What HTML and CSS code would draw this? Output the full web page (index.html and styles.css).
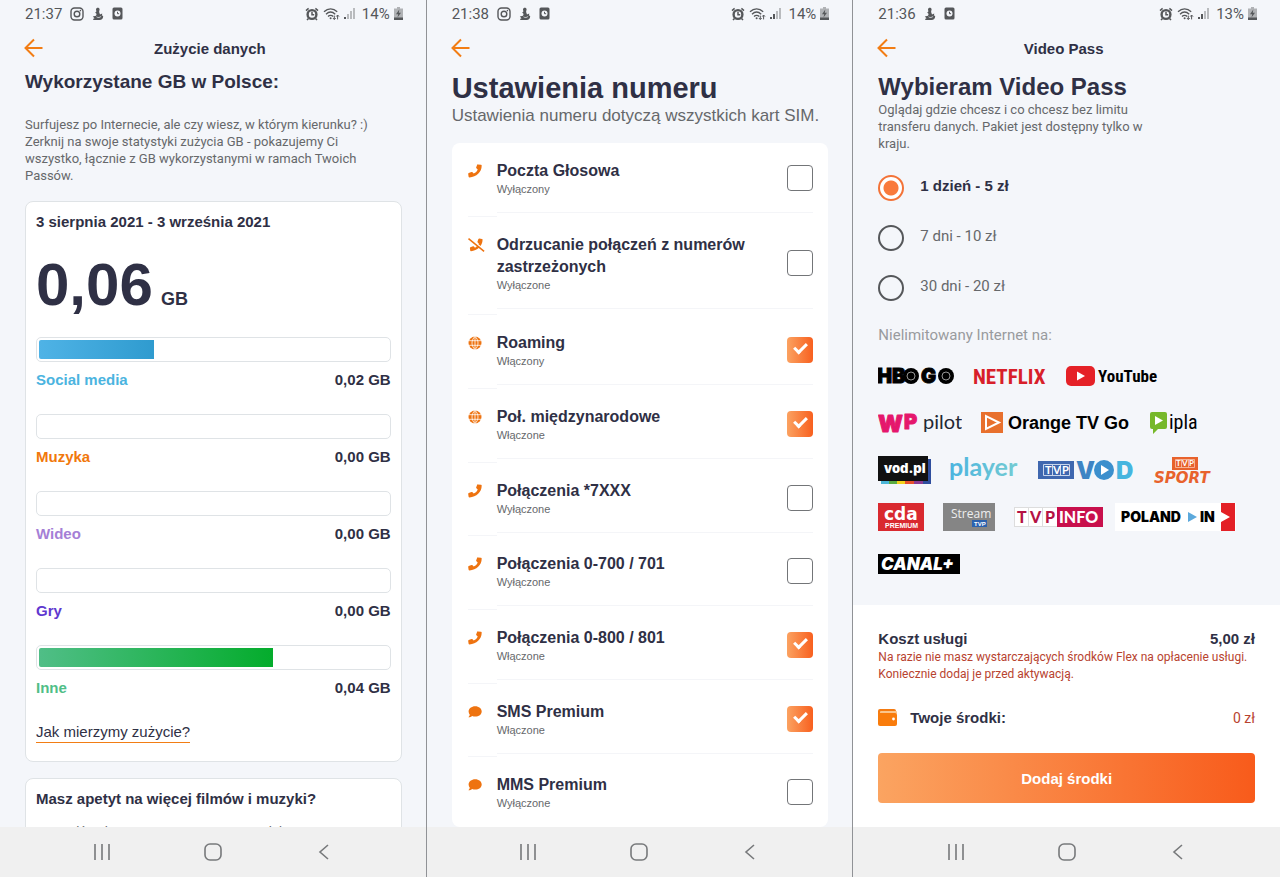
FILE: index.html
```html
<!DOCTYPE html>
<html lang="pl">
<head>
  <meta charset="UTF-8">
  <meta name="viewport" content="width=device-width, initial-scale=1.0">
  <title>Orange Flex</title>
  <link rel="stylesheet" href="styles.css">
</head>
<body>
  <!-- Shared icons -->
  <svg class="sprite" aria-hidden="true">
    <symbol id="i-insta" viewBox="0 0 14 14">
      <rect x="1" y="1" width="12" height="12" rx="3.5" fill="none" stroke="currentColor" stroke-width="1.4"/>
      <circle cx="7" cy="7" r="2.8" fill="none" stroke="currentColor" stroke-width="1.4"/>
      <circle cx="10.4" cy="3.6" r=".8" fill="currentColor"/>
    </symbol>
    <symbol id="i-swan" viewBox="0 0 12 14">
      <path d="M4 2.500C4 1.300 4.900.8 5.800.8s1.900.6 1.800 1.700C7.500 3.600 7 4 7.200 5.200L8 7.500 10.200 6.500 10 8.500l1.200.4C11.200 11.500 9.800 13 7.500 13H1.500L1 12l1.500-.8L.8 9.500 4 8.800 4.600 7 3.200 5.500l1.200-.9z" fill="currentColor"/>
      <path d="M4.500 9.800c1.500 1.200 3.500.8 4.700-.6" fill="none" stroke="#f4f6fa" stroke-width=".7"/>
    </symbol>
    <symbol id="i-doc" viewBox="0 0 11 13">
      <rect x=".5" y=".5" width="10" height="12" rx="1.500" fill="currentColor"/>
      <circle cx="5.500" cy="6.500" r="3" fill="#f4f6fa"/>
      <path d="M5.500 4.800v1.900h1.600" fill="none" stroke="currentColor" stroke-width="1"/>
    </symbol>
    <symbol id="i-alarm" viewBox="0 0 14 14">
      <circle cx="7" cy="7.500" r="4.400" fill="#f4f6fa" stroke="currentColor" stroke-width="2.400"/>
      <path d="M7 4.800v3h2.200M1 3.600L3.600 1.400M13 3.600l-2.600-2.200M3.500 11.500l-1.500 1.600M10.500 11.500l1.500 1.600" fill="none" stroke="currentColor" stroke-width="1.500"/>
    </symbol>
    <symbol id="i-wifi" viewBox="0 0 17 14">
      <path d="M1 4.800c4-4 9.200-4 13.200 0M3 7.200c2.800-2.700 6.400-2.700 9.200 0M5 9.500c1.500-1.500 3.700-1.500 5.200 0" fill="none" stroke="currentColor" stroke-width="1.300"/>
      <circle cx="7.600" cy="11.300" r="1" fill="currentColor"/>
      <path d="M11.300 8.600v3.800M9.900 11l1.400 1.500 1.400-1.500M14.600 12.400V8.200M13.200 9.600L14.600 8l1.400 1.600" fill="none" stroke="currentColor" stroke-width="1"/>
    </symbol>
    <symbol id="i-signal" viewBox="0 0 12 13">
      <rect x="0" y="10" width="2" height="2" fill="currentColor"/>
      <rect x="3" y="7" width="2" height="5" fill="currentColor"/>
      <rect x="6" y="4" width="2" height="8" fill="#b9bbbe"/>
      <rect x="9" y="1" width="2" height="11" fill="#b9bbbe"/>
    </symbol>
    <symbol id="i-signal-low" viewBox="0 0 12 13">
      <rect x="0" y="10" width="2" height="2" fill="currentColor"/>
      <rect x="3" y="7" width="2" height="5" fill="#b9bbbe"/>
      <rect x="6" y="4" width="2" height="8" fill="#b9bbbe"/>
      <rect x="9" y="1" width="2" height="11" fill="#b9bbbe"/>
    </symbol>
    <symbol id="i-battery" viewBox="0 0 9 13">
      <path d="M3 0h3v1.500h3V13H0V1.500h3z" fill="#b0b2b5"/>
      <rect x="0" y="10.500" width="9" height="2.500" fill="currentColor"/>
      <path d="M5.300 2.500L2 7.300h2.200L3.500 10.500 7 5.800H4.800z" fill="currentColor"/>
    </symbol>
    <symbol id="i-back" viewBox="0 0 20 20">
      <path d="M18.500 10H2M10 1.500L1.500 10l8.500 8.500" fill="none" stroke="currentColor" stroke-width="2"/>
    </symbol>
    <symbol id="i-recent" viewBox="0 0 18 18">
      <path d="M2 1v16M9 1v16M16 1v16" fill="none" stroke="currentColor" stroke-width="1.600"/>
    </symbol>
    <symbol id="i-home" viewBox="0 0 18 18">
      <rect x="1" y="1" width="16" height="16" rx="5" fill="none" stroke="currentColor" stroke-width="1.600"/>
    </symbol>
    <symbol id="i-prev" viewBox="0 0 18 18">
      <path d="M13 2L5 9l8 7" fill="none" stroke="currentColor" stroke-width="1.600"/>
    </symbol>
    <symbol id="i-phone" viewBox="0 0 14 14">
      <path d="M10 .4L13 .8c.4 0 .7.400.7.800C13.700 8.400 8.400 13 1.500 13.400c-.4 0-.8-.3-.9-.7L.2 10c-.1-.4.100-.8.500-1L3.500 8c.4-.1.800 0 1 .3l1.200 1.300C7.700 8.600 9 7.200 9.700 5.400L8.400 4.300c-.3-.3-.4-.7-.2-1L9.100.9C9.200.5 9.600.3 10 .4z" fill="currentColor"/>
    </symbol>
    <symbol id="i-phone-off" viewBox="0 0 17 14">
      <path d="M11.300.5l2.700.4c.3 0 .6.400.6.700C14.500 8.200 9.300 12.900 3 13.200c-.4 0-.7-.3-.8-.6L1.900 10c0-.4.200-.7.500-.8L5 8.300c.4-.1.700 0 .9.200l1.100 1.200C8.900 8.700 10.100 7.400 10.800 5.600L9.700 4.500c-.3-.3-.3-.6-.2-.9l.9-2.500c.1-.4.500-.6.900-.6z" fill="currentColor"/>
      <path d="M1.500 0l15.500 12.500" stroke="#fff" stroke-width="1.500"/>
      <path d="M.5.700l15.600 12.600" stroke="currentColor" stroke-width="1.500"/>
    </symbol>
    <symbol id="i-globe" viewBox="0 0 14 14">
      <circle cx="7" cy="7" r="6.500" fill="currentColor"/>
      <path d="M.5 4.700h13M.5 9.300h13M7 0v14M7 .5C3 4 3 10 7 13.500M7 .5c4 3.500 4 9.500 0 13" fill="none" stroke="#fff" stroke-width=".8"/>
    </symbol>
    <symbol id="i-chat" viewBox="0 0 14 14">
      <path d="M7.200 1.200c3.700 0 6.500 2.300 6.500 5.200s-2.800 5.200-6.500 5.200c-1.100 0-2.100-.2-3-.6-.9.700-2.200 1.300-3.800 1.300.8-.8 1.300-1.700 1.400-2.600C1.100 8.700.6 7.600.6 6.400c0-2.900 2.900-5.200 6.600-5.200z" fill="currentColor"/>
    </symbol>
  </svg>

  <div class="screens">

    <!-- Data usage -->
    <section class="phone">
      <div class="status-bar">
        <span class="time">21:37</span>
        <svg class="s-icon" width="14" height="14"><use href="#i-insta"/></svg>
        <svg class="s-icon" width="12" height="14"><use href="#i-swan"/></svg>
        <svg class="s-icon" width="11" height="13"><use href="#i-doc"/></svg>
        <div class="status-right">
          <svg width="14" height="14"><use href="#i-alarm"/></svg>
          <svg width="17" height="14"><use href="#i-wifi"/></svg>
          <svg width="12" height="13"><use href="#i-signal-low"/></svg>
          <span class="percent">14%</span>
          <svg width="9" height="13"><use href="#i-battery"/></svg>
        </div>
      </div>
      <header class="top-bar">
        <button class="back" aria-label="Wstecz"><svg width="20" height="20"><use href="#i-back"/></svg></button>
        <div class="top-title">Zużycie danych</div>
      </header>
      <div class="screen">
        <h1 class="usage-heading">Wykorzystane GB w Polsce:</h1>
        <p class="usage-intro">Surfujesz po Internecie, ale czy wiesz, w którym kierunku? :) Zerknij na swoje statystyki zużycia GB - pokazujemy Ci wszystko, łącznie z GB wykorzystanymi w ramach Twoich Passów.</p>
        <div class="card">
          <h2 class="card-title">3 sierpnia 2021 - 3 września 2021</h2>
          <div class="total"><span class="total-value">0,06</span> <span class="total-unit">GB</span></div>
          <div class="usage social">
            <div class="track"><div class="fill" style="width: 33%"></div></div>
            <div class="usage-row"><span class="usage-name">Social media</span><span>0,02 GB</span></div>
          </div>
          <div class="usage music">
            <div class="track"></div>
            <div class="usage-row"><span class="usage-name">Muzyka</span><span>0,00 GB</span></div>
          </div>
          <div class="usage video">
            <div class="track"></div>
            <div class="usage-row"><span class="usage-name">Wideo</span><span>0,00 GB</span></div>
          </div>
          <div class="usage games">
            <div class="track"></div>
            <div class="usage-row"><span class="usage-name">Gry</span><span>0,00 GB</span></div>
          </div>
          <div class="usage other">
            <div class="track"><div class="fill" style="width: 67%"></div></div>
            <div class="usage-row"><span class="usage-name">Inne</span><span>0,04 GB</span></div>
          </div>
          <a class="how-link" href="#">Jak mierzymy zużycie?</a>
        </div>
        <div class="card">
          <h2 class="card-title">Masz apetyt na więcej filmów i muzyki?</h2>
          <p class="card-text">Sprawdź Video i Music Pass i ciesz się ulubionymi serwisami bez limitu.</p>
        </div>
      </div>
      <nav class="nav-bar">
        <button aria-label="Ostatnie"><svg width="18" height="18"><use href="#i-recent"/></svg></button>
        <button aria-label="Ekran główny"><svg width="18" height="18"><use href="#i-home"/></svg></button>
        <button aria-label="Wstecz"><svg width="18" height="18"><use href="#i-prev"/></svg></button>
      </nav>
    </section>

    <!-- Number settings -->
    <section class="phone">
      <div class="status-bar">
        <span class="time">21:38</span>
        <svg class="s-icon" width="14" height="14"><use href="#i-insta"/></svg>
        <svg class="s-icon" width="12" height="14"><use href="#i-swan"/></svg>
        <svg class="s-icon" width="11" height="13"><use href="#i-doc"/></svg>
        <div class="status-right">
          <svg width="14" height="14"><use href="#i-alarm"/></svg>
          <svg width="17" height="14"><use href="#i-wifi"/></svg>
          <svg width="12" height="13"><use href="#i-signal"/></svg>
          <span class="percent">14%</span>
          <svg width="9" height="13"><use href="#i-battery"/></svg>
        </div>
      </div>
      <header class="top-bar">
        <button class="back" aria-label="Wstecz"><svg width="20" height="20"><use href="#i-back"/></svg></button>
      </header>
      <div class="screen settings">
        <h1 class="settings-heading">Ustawienia numeru</h1>
        <p class="settings-sub">Ustawienia numeru dotyczą wszystkich kart SIM.</p>
        <ul class="options">
          <li class="option">
            <div class="option-icon"><svg width="14" height="14"><use href="#i-phone"/></svg></div>
            <div class="option-body">
              <label for="o1">Poczta Głosowa<small>Wyłączony</small></label>
              <input type="checkbox" id="o1">
            </div>
          </li>
          <li class="option tall">
            <div class="option-icon"><svg width="17" height="14"><use href="#i-phone-off"/></svg></div>
            <div class="option-body">
              <label for="o2">Odrzucanie połączeń z numerów zastrzeżonych<small>Wyłączone</small></label>
              <input type="checkbox" id="o2">
            </div>
          </li>
          <li class="option">
            <div class="option-icon"><svg width="14" height="14"><use href="#i-globe"/></svg></div>
            <div class="option-body">
              <label for="o3">Roaming<small>Włączony</small></label>
              <input type="checkbox" id="o3" checked>
            </div>
          </li>
          <li class="option">
            <div class="option-icon"><svg width="14" height="14"><use href="#i-globe"/></svg></div>
            <div class="option-body">
              <label for="o4">Poł. międzynarodowe<small>Włączone</small></label>
              <input type="checkbox" id="o4" checked>
            </div>
          </li>
          <li class="option">
            <div class="option-icon"><svg width="14" height="14"><use href="#i-phone"/></svg></div>
            <div class="option-body">
              <label for="o5">Połączenia *7XXX<small>Wyłączone</small></label>
              <input type="checkbox" id="o5">
            </div>
          </li>
          <li class="option">
            <div class="option-icon"><svg width="14" height="14"><use href="#i-phone"/></svg></div>
            <div class="option-body">
              <label for="o6">Połączenia 0-700 / 701<small>Wyłączone</small></label>
              <input type="checkbox" id="o6">
            </div>
          </li>
          <li class="option">
            <div class="option-icon"><svg width="14" height="14"><use href="#i-phone"/></svg></div>
            <div class="option-body">
              <label for="o7">Połączenia 0-800 / 801<small>Włączone</small></label>
              <input type="checkbox" id="o7" checked>
            </div>
          </li>
          <li class="option">
            <div class="option-icon"><svg width="14" height="14"><use href="#i-chat"/></svg></div>
            <div class="option-body">
              <label for="o8">SMS Premium<small>Włączone</small></label>
              <input type="checkbox" id="o8" checked>
            </div>
          </li>
          <li class="option">
            <div class="option-icon"><svg width="14" height="14"><use href="#i-chat"/></svg></div>
            <div class="option-body">
              <label for="o9">MMS Premium<small>Wyłączone</small></label>
              <input type="checkbox" id="o9">
            </div>
          </li>
        </ul>
      </div>
      <nav class="nav-bar">
        <button aria-label="Ostatnie"><svg width="18" height="18"><use href="#i-recent"/></svg></button>
        <button aria-label="Ekran główny"><svg width="18" height="18"><use href="#i-home"/></svg></button>
        <button aria-label="Wstecz"><svg width="18" height="18"><use href="#i-prev"/></svg></button>
      </nav>
    </section>

    <!-- Video Pass -->
    <section class="phone">
      <div class="status-bar">
        <span class="time">21:36</span>
        <svg class="s-icon" width="12" height="14"><use href="#i-swan"/></svg>
        <svg class="s-icon" width="11" height="13"><use href="#i-doc"/></svg>
        <div class="status-right">
          <svg width="14" height="14"><use href="#i-alarm"/></svg>
          <svg width="17" height="14"><use href="#i-wifi"/></svg>
          <svg width="12" height="13"><use href="#i-signal"/></svg>
          <span class="percent">13%</span>
          <svg width="9" height="13"><use href="#i-battery"/></svg>
        </div>
      </div>
      <header class="top-bar">
        <button class="back" aria-label="Wstecz"><svg width="20" height="20"><use href="#i-back"/></svg></button>
        <div class="top-title">Video Pass</div>
      </header>
      <div class="screen">
        <h1 class="pass-heading">Wybieram Video Pass</h1>
        <p class="pass-intro">Oglądaj gdzie chcesz i co chcesz bez limitu transferu danych. Pakiet jest dostępny tylko w kraju.</p>
        <div class="plans">
          <div class="plan"><input type="radio" name="plan" id="p1" checked><label for="p1">1 dzień - 5 zł</label></div>
          <div class="plan"><input type="radio" name="plan" id="p7"><label for="p7">7 dni - 10 zł</label></div>
          <div class="plan"><input type="radio" name="plan" id="p30"><label for="p30">30 dni - 20 zł</label></div>
        </div>
        <p class="logos-title">Nielimitowany Internet na:</p>
        <ul class="logos">
          <li><svg width="77" height="28">
            <g class="f-inter heavy" font-size="20" stroke="#000">
              <text x="-1" y="21">HB</text><text x="43" y="21">G</text>
            </g>
            <g class="f-inter heavy" font-size="12" text-anchor="middle">
              <text x="34" y="18">O</text><text x="68" y="18">O</text>
            </g>
            <circle cx="33" cy="14" r="8"/><circle cx="33" cy="14" r="4" fill="none" stroke="#bbb" stroke-width=".8"/>
            <circle cx="68" cy="14" r="8"/><circle cx="68" cy="14" r="4" fill="none" stroke="#bbb" stroke-width=".8"/>
          </svg></li>
          <li><svg width="75" height="28"><text class="f-narrow bold" x="0" y="22" font-size="21" fill="#d81f2a">NETFLIX</text></svg></li>
          <li><svg width="92" height="28">
            <rect x="0" y="4" width="29" height="20" rx="5" fill="#e52127"/><path d="M11 9.500v9l8-4.500z" fill="#fff"/>
            <text class="f-narrow bold" x="32" y="20" font-size="17">YouTube</text>
          </svg></li>
          <li><svg width="84" height="28">
            <g class="f-inter heavy" fill="#e5176c" stroke="#e5176c" stroke-width="1" stroke-linejoin="round">
              <text x="0" y="23" font-size="23">W</text><text x="26" y="20" font-size="20">P</text>
            </g>
            <text class="f-lato" x="45" y="20" font-size="20" fill="#222733">pilot</text>
          </svg></li>
          <li><svg width="151" height="28">
            <rect x="1" y="3" width="22" height="21" fill="#e8702d"/><path d="M6 7v13l13-6.500z" fill="none" stroke="#fff" stroke-width="2"/>
            <text class="f-sans bold" x="28" y="20" font-size="18">Orange TV Go</text>
          </svg></li>
          <li><svg width="52" height="28">
            <path d="M3 3h13q2 0 2 2v13q0 2-2 2H9l-5 5v-5H3q-2 0-2-2V5q0-2 2-2z" fill="#76b82a"/><path d="M6 7v9l8-4.500z" fill="#fff"/>
            <text class="f-narrow" x="20" y="20" font-size="20">ipla</text>
          </svg></li>
          <li><svg width="53" height="28">
            <path d="M3 3h50v25H3z" fill="#2e4d9d"/><path d="M3 25h8v3H3z" fill="#4bb6d8"/><path d="M11 25h8v3h-8z" fill="#5aac41"/><path d="M19 25h8v3h-8z" fill="#f2d21b"/><path d="M27 25h9v3h-9z" fill="#e6502c"/><path d="M36 25h9v3h-9z" fill="#8b3b94"/>
            <rect width="50" height="25" fill="#111"/>
            <text class="f-inter heavy" x="6" y="17" font-size="13" fill="#fff">vod.pl</text>
          </svg></li>
          <li><svg width="70" height="28">
            <linearGradient id="g-player" x2="1"><stop stop-color="#4bb4df"/><stop offset="1" stop-color="#74cbd2"/></linearGradient>
            <text class="f-lato bold" x="0" y="20" font-size="25" fill="url(#g-player)">player</text>
          </svg></li>
          <li><svg width="98" height="28">
            <rect x="1" y="5" width="36" height="18" fill="#3f67af"/>
            <path d="M6.500 8.500h26v11h-26zM15.500 8.500v11M23.500 8.500v11" fill="none" stroke="#c9d6ec"/>
            <g class="f-lato bold" font-size="11" fill="#fff"><text x="8" y="18">T</text><text x="16" y="18">V</text><text x="25" y="18">P</text></g>
            <g class="f-inter heavy" font-size="24"><text x="39" y="23" fill="#3d84c4">V</text><text x="79" y="23" fill="#45b5df">D</text></g>
            <text class="f-inter heavy" x="67" y="18" font-size="12" text-anchor="middle" fill="#3b8fcd">O</text>
            <circle cx="67" cy="14" r="10" fill="#3b8fcd"/><path d="M64 9v10l8-5z" fill="#fff"/>
          </svg></li>
          <li><svg width="66" height="28">
            <rect x="19" y="1" width="26" height="13" fill="#e8622c"/>
            <path d="M22.500 3.500h19v8h-19zM28.500 3.500v8M35.500 3.500v8" fill="none" stroke="#f7c5ad" stroke-width=".8"/>
            <g class="f-lato bold" font-size="8" fill="#fff"><text x="23" y="10">T</text><text x="29" y="10">V</text><text x="36" y="10">P</text></g>
            <text class="f-dejavu bold italic" x="1" y="27" font-size="15" fill="#e8622c">SPORT</text>
          </svg></li>
          <li><svg width="47" height="28">
            <rect width="46" height="28" fill="#d9292f"/>
            <text class="f-dejavu bold" x="6" y="17" font-size="17" fill="#fff">cda</text>
            <text class="f-sans bold" x="7" y="25" font-size="7" fill="#fff">PREMIUM</text>
          </svg></li>
          <li><svg width="53" height="28">
            <rect width="52" height="28" fill="#858585"/>
            <text class="f-open" x="8" y="15" font-size="12" fill="#eee">Stream</text>
            <rect x="29" y="17" width="15" height="7" fill="#2c62ae"/>
            <text class="f-sans bold" x="31" y="23" font-size="6" fill="#fff">TVP</text>
          </svg></li>
          <li><svg width="89" height="28">
            <rect x=".5" y="4.500" width="88" height="19" fill="#fff" stroke="#ddd"/><path d="M43 4h46v20H43z" fill="#c8104c"/>
            <path d="M14.500 4v20M28.500 4v20" stroke="#ddd"/>
            <g class="f-lato heavy" font-size="16" fill="#b41244"><text x="3" y="20">T</text><text x="16" y="20">V</text><text x="31" y="20">P</text></g>
            <text class="f-lato heavy" x="45" y="20" font-size="16" fill="#fff">INFO</text>
          </svg></li>
          <li><svg class="wide-bg" width="115" height="28">
            <rect x="-6" width="121" height="28" fill="#fff"/><path d="M100 0h14v28h-14v-9l9-5-9-5z" fill="#e32026"/>
            <text class="f-inter heavy" x="0" y="19" font-size="14">POLAND</text>
            <path d="M67 9v10l9-5z" fill="#5ca9dc"/>
            <text class="f-inter heavy" x="79" y="19" font-size="14">IN</text>
          </svg></li>
          <li><svg width="83" height="28">
            <rect y="4" width="82" height="20"/>
            <text class="f-inter heavy italic" x="3" y="20" font-size="17" fill="#fff">CANAL+</text>
          </svg></li>
        </ul>
      </div>
      <div class="checkout">
        <div class="cost"><span>Koszt usługi</span><span>5,00 zł</span></div>
        <p class="warning">Na razie nie masz wystarczających środków Flex na opłacenie usługi. Koniecznie dodaj je przed aktywacją.</p>
        <div class="wallet">
          <svg width="20" height="18" viewBox="0 0 20 18"><rect x="0" y="0" width="18" height="8" rx="2" fill="#f47b12"/><rect x="2" y="2" width="17" height="3" rx="1" fill="#fbc58c"/><rect x="0" y="4" width="19" height="13" rx="2" fill="#f97c0c"/><circle cx="15.500" cy="10" r="1.400" fill="#fff"/></svg>
          <span class="wallet-label">Twoje środki:</span>
          <span class="wallet-value">0 zł</span>
        </div>
        <button class="pay">Dodaj środki</button>
      </div>
      <nav class="nav-bar">
        <button aria-label="Ostatnie"><svg width="18" height="18"><use href="#i-recent"/></svg></button>
        <button aria-label="Ekran główny"><svg width="18" height="18"><use href="#i-home"/></svg></button>
        <button aria-label="Wstecz"><svg width="18" height="18"><use href="#i-prev"/></svg></button>
      </nav>
    </section>

  </div>
</body>
</html>
```
FILE: styles.css
```css
:root {
  --page-bg: #f4f6fa;
  --dark: #2f3045;
  --grey: #66686b;
  --orange: #f27d14;
  --line: #dfe3e6;
  --red: #b8432f;
  --helv: "Liberation Sans", Arial, sans-serif;
  --roboto: Roboto, sans-serif;
}
* {
  box-sizing: border-box;
}
body {
  margin: 0;
  background: var(--page-bg);
  color: var(--dark);
  font-family: var(--helv);
  font-size: 15px;
}
h1, h2, p, ul {
  margin: 0;
  padding: 0;
}
ul {
  list-style: none;
}
button {
  border: none;
  background: none;
  padding: 0;
  color: inherit;
  cursor: pointer;
}
svg {
  display: block;
}
.sprite {
  display: none;
}
/* Three phone screens side by side */
.screens {
  display: grid;
  grid-template-columns: repeat(3, 1fr);
  height: 100vh;
}
.phone {
  display: flex;
  flex-direction: column;
  min-width: 0;
  min-height: 0;
  border-right: 1px solid #909296;
}
.phone:last-child {
  border-right: none;
}
/* Android status bar */
.status-bar {
  display: flex;
  align-items: center;
  flex: none;
  height: 27px;
  padding: 0 23px 0 25px;
  color: #55575a;
  font-family: var(--roboto);
}
.s-icon {
  margin-left: 8px;
}
.status-right {
  display: flex;
  align-items: center;
  gap: 4px;
  margin-left: auto;
}
.percent {
  margin-left: 2px;
}
/* App bar */
.top-bar {
  display: flex;
  align-items: center;
  flex: none;
  height: 42px;
  padding: 0 50px 0 24px;
}
.top-bar .back {
  color: var(--orange);
}
.top-title {
  flex: 1;
  text-align: center;
  font-weight: bold;
}
.screen {
  flex: 1;
  min-height: 0;
  padding: 0 24px 0 25px;
  overflow: hidden;
}
/* Data usage */
.usage-heading {
  font-size: 19px;
  line-height: 26px;
}
.usage-intro {
  max-width: 360px;
  margin: 21px 0 17px;
  color: var(--grey);
  font-family: var(--roboto);
  font-size: 13px;
  line-height: 17px;
}
.card {
  margin-bottom: 16px;
  padding: 10px;
  background: #fff;
  border: 1px solid var(--line);
  border-radius: 8px;
}
.card-title {
  font-size: 15px;
  line-height: 20px;
}
.card-text {
  margin-top: 14px;
  color: var(--grey);
  font-family: var(--roboto);
  font-size: 13px;
  line-height: 17px;
}
.total {
  margin: 18px 0 2px;
  font-weight: bold;
  line-height: 70px;
}
.total-value {
  font-size: 60px;
}
.total-unit {
  margin-left: 4px;
  font-size: 18px;
}
.usage {
  height: 77px;
}
.track {
  height: 25px;
  padding: 2px;
  border: 1px solid var(--line);
  border-radius: 5px;
}
.fill {
  height: 100%;
  border-radius: 2px 0 0 2px;
}
.usage-row {
  display: flex;
  justify-content: space-between;
  margin-top: 8px;
  font-weight: bold;
  line-height: 20px;
}
.social .fill {
  background: linear-gradient(to right, #4fb3e6, #2f9bcf);
}
.other .fill {
  background: linear-gradient(to right, #50be87, #04ac2c);
}
.social .usage-name { color: #4bb4e0; }
.music .usage-name { color: #f1780c; }
.video .usage-name { color: #a57fd6; }
.games .usage-name { color: #6038cf; }
.other .usage-name { color: #50be87; }
.how-link {
  display: inline-block;
  margin-bottom: 8px;
  border-bottom: 1px solid var(--orange);
  color: var(--dark);
  line-height: 20px;
  text-decoration: none;
}
/* Number settings */
.settings {
  display: flex;
  flex-direction: column;
}
.settings-heading {
  margin-top: 2px;
  font-size: 29px;
  line-height: 34px;
}
.settings-sub {
  margin-bottom: 16px;
  color: var(--grey);
  font-size: 17px;
  line-height: 22px;
  white-space: nowrap;
}
.options {
  display: flex;
  flex-direction: column;
  flex: 1;
  min-height: 0;
  padding: 0 15px 0 16px;
  background: #fff;
  border-radius: 8px;
}
.option {
  display: flex;
  flex: 0 1 74px;
  min-height: 0;
}
.option.tall {
  flex-basis: 99px;
}
.option-icon {
  width: 29px;
  padding-top: 21px;
  border-bottom: 1px solid #f4f5f8;
  color: #ee7310;
}
.option-body {
  display: flex;
  flex: 1;
  align-items: center;
  justify-content: space-between;
  align-self: flex-start;
  padding: 17px 0 16px;
  border-bottom: 1px solid #f4f5f8;
}
.option:last-child {
  flex-basis: 70px;
}
.option:last-child > * {
  border-bottom: none;
}
.option label {
  font-size: 16px;
  font-weight: bold;
  line-height: 22px;
}
.option small {
  display: block;
  color: var(--grey);
  font-size: 11px;
  font-weight: normal;
  line-height: 14px;
}
.option input {
  flex: none;
  width: 26px;
  height: 26px;
  margin: 0;
  appearance: none;
  background: #fff;
  border: 1px solid #737578;
  border-radius: 4px;
}
.option input:checked {
  display: grid;
  place-items: center;
  background: linear-gradient(to right, #fba261, #f8601f);
  border: none;
}
.option input:checked::after {
  content: "";
  box-sizing: border-box;
  width: 13px;
  height: 8px;
  margin-bottom: 6px;
  border: solid #fff;
  border-width: 0 0 3px 3px;
  transform: rotate(-45deg);
}
/* Video Pass */
.pass-heading {
  margin-top: 3px;
  font-size: 24px;
  line-height: 29px;
}
.pass-intro {
  max-width: 280px;
  color: var(--grey);
  font-family: var(--roboto);
  font-size: 13px;
  line-height: 17px;
}
.plans {
  margin-top: 23px;
}
.plan {
  display: flex;
  height: 50px;
}
.plan input {
  width: 26px;
  height: 26px;
  margin: 0 16px 0 0;
  appearance: none;
  border: 2px solid #55575a;
  border-radius: 50%;
}
.plan label {
  color: var(--grey);
  font-family: var(--roboto);
  line-height: 22px;
}
.plan input:checked {
  border-color: #f37338;
  background: radial-gradient(circle, #f97a3c 7px, #fff 8px);
}
.plan input:checked + label {
  color: var(--dark);
  font-family: var(--helv);
  font-weight: bold;
}
.logos-title {
  color: #999b9e;
  font-family: var(--roboto);
  line-height: 20px;
}
.logos {
  display: flex;
  flex-wrap: wrap;
  gap: 19px 18px;
  margin-top: 17px;
}
.wide-bg {
  overflow: visible;
}
.f-sans { font-family: "Liberation Sans", sans-serif; }
.f-narrow { font-family: "Liberation Sans Narrow", "Roboto Condensed", "DejaVu Sans Condensed", sans-serif; }
.f-inter { font-family: Inter, sans-serif; }
.f-lato { font-family: Lato, sans-serif; }
.f-open { font-family: "Open Sans", sans-serif; }
.f-dejavu { font-family: "DejaVu Sans", sans-serif; }
.bold { font-weight: bold; }
.heavy { font-weight: 900; }
.italic { font-style: italic; }
/* Payment panel */
.checkout {
  flex: none;
  padding: 24px 25px;
  background: #fff;
}
.cost {
  display: flex;
  justify-content: space-between;
  font-weight: bold;
  line-height: 20px;
}
.warning {
  color: var(--red);
  font-family: var(--roboto);
  font-size: 12px;
  line-height: 17px;
}
.wallet {
  display: flex;
  align-items: center;
  margin: 25px 0;
  line-height: 20px;
}
.wallet-label {
  margin-left: 12px;
  font-weight: bold;
}
.wallet-value {
  margin-left: auto;
  color: var(--red);
  font-family: var(--roboto);
  font-size: 14px;
}
.checkout .pay {
  display: block;
  width: 100%;
  height: 50px;
  background: linear-gradient(to right, #fba461, #f85b1b);
  border-radius: 4px;
  color: #fff;
  font-family: var(--helv);
  font-size: 15px;
  font-weight: bold;
}
/* Android navigation bar */
.nav-bar {
  display: flex;
  align-items: center;
  justify-content: center;
  flex: none;
  gap: 93px;
  height: 50px;
  background: #f0f0f0;
  color: #77797b;
}
```
